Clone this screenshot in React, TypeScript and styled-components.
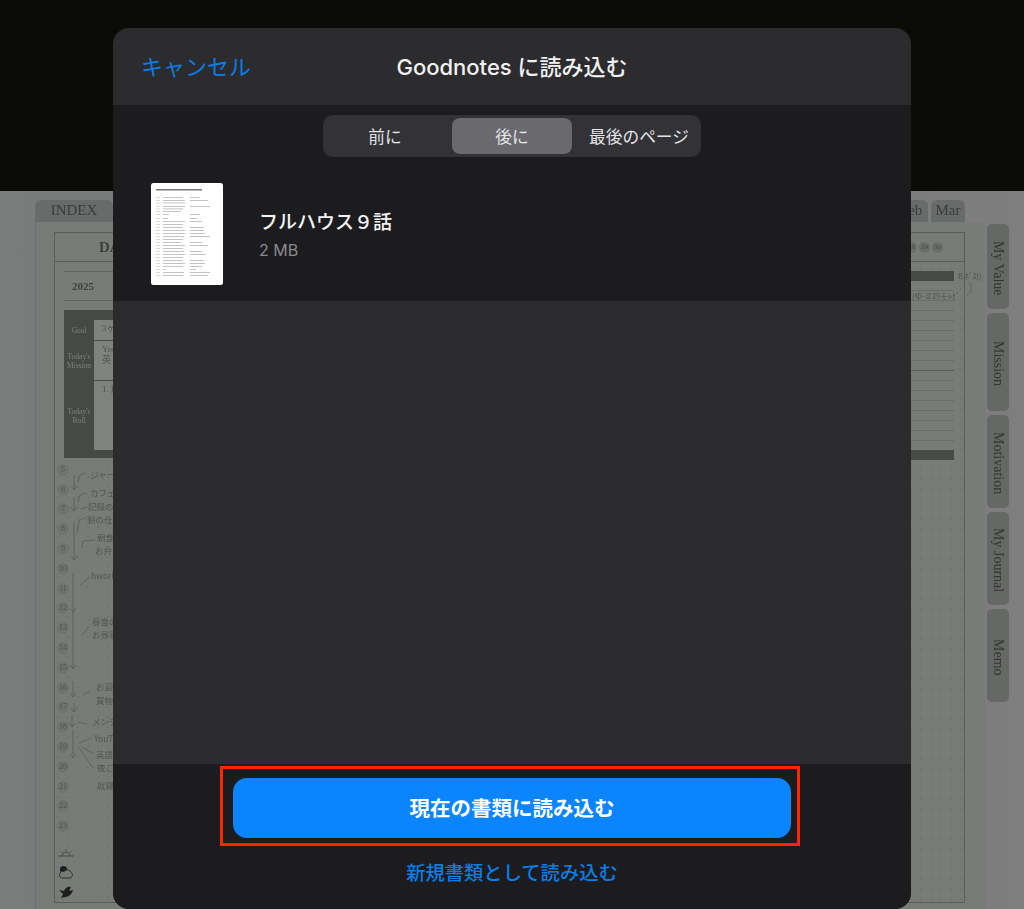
import React from 'react'
import styled, { createGlobalStyle } from 'styled-components'

const UI_FONT = `Inter, "Noto Sans CJK JP", sans-serif`
const SERIF = `"Liberation Serif", "Noto Sans CJK JP", serif`

const GlobalStyle = createGlobalStyle`
  html, body { margin: 0; padding: 0; background: #0b0c08; }
  * { box-sizing: border-box; }
`

const Screen = styled.div`
  position: relative;
  width: 1024px;
  height: 909px;
  overflow: hidden;
  background: #0b0c08;
`

// dimmed planner behind the sheet
const Planner = styled.div`
  margin-top: 191px;
  height: 718px;
  padding-top: 9px;
  background: linear-gradient(90deg, #7a7c7b, #747675 50%, #7d7e7d);
  filter: blur(0.5px);
`

const TabRow = styled.div`
  display: flex;
  justify-content: space-between;
  width: 930px;
  height: 22px;
  margin-left: 35px;
`

const TabGroup = styled.div`
  display: flex;
  gap: 3px;
`

const MonthTab = styled.div<{ $w: number }>`
  width: ${p => p.$w}px;
  height: 22px;
  border-radius: 6px 6px 0 0;
  background: #686b69;
  color: #3a3c3a;
  font: 15px/20px ${SERIF};
  text-align: center;
`

const PlannerRow = styled.div`
  display: flex;
  height: 687px;
`

const Sheet = styled.div`
  width: 950px;
  margin-left: 35px;
  padding: 10px 20px 6px 18px;
  background: #787c78;
  border-left: 1px solid #6d706d;
`

const Frame = styled.div`
  display: flex;
  flex-direction: column;
  height: 671px;
  border: 1px solid #5a5d5a;
`

const FrameHead = styled.div`
  display: flex;
  align-items: center;
  justify-content: space-between;
  flex: none;
  height: 29px;
  padding: 0 21px 0 44px;
  border-bottom: 1px solid #5a5d5a;
  color: #3c3e3c;
  font: bold 15px ${SERIF};
`

const DateList = styled.div`
  display: flex;
  gap: 2px;
`

const DateDot = styled.span`
  width: 11px;
  height: 11px;
  border-radius: 50%;
  background: #6a6d6a;
  color: #4a4c4a;
  font: 7px/11px ${SERIF};
  text-align: center;
`

const FrameBody = styled.div`
  display: grid;
  flex: 1;
  grid-template-columns: 110px 1fr 70px;
`

const LeftColumn = styled.div`
  padding-top: 9px;
`

const YearBlock = styled.div`
  height: 30px;
  margin: 0 0 9px 9px;
  padding-left: 8px;
  border-top: 1px solid #5f625f;
  border-bottom: 1px solid #5f625f;
  color: #3f413f;
  font: bold 11px/28px ${SERIF};
`

const RoleTable = styled.div`
  display: grid;
  grid-template-columns: 30px 1fr;
  grid-template-rows: 20px 39px 69px;
  row-gap: 1px;
  height: 148px;
  margin-left: 9px;
  padding: 10px 0;
  background: #464946;
`

const RoleLabel = styled.div`
  display: flex;
  align-items: center;
  justify-content: center;
  color: #7f827f;
  font: 7.5px/9px ${SERIF};
  text-align: center;
`

const RoleCell = styled.div`
  padding: 3px 0 0 8px;
  background: #7e837e;
  color: #4f514f;
  font: 9px/11px ${SERIF};
`

const HourArea = styled.div`
  position: relative;
  margin-top: 2px;
  background-image: radial-gradient(circle, #6f736f 0.6px, transparent 1px);
  background-size: 10px 10px;
  background-position: 18px 2px;
`

const HourRow = styled.div`
  display: flex;
  align-items: center;
  height: 19.8px;
  padding-left: 2px;
`

const HourDot = styled.span`
  width: 12px;
  height: 12px;
  border-radius: 50%;
  background: #707370;
  color: #505250;
  font: 8px/12px ${SERIF};
  text-align: center;
`

const WeatherList = styled.div`
  display: flex;
  flex-direction: column;
  margin-top: 7px;
  padding-left: 1px;
`

const ScribbleLayer = styled.svg`
  position: absolute;
  top: 0;
  left: 0;
  overflow: visible;
  pointer-events: none;
`

const RightColumn = styled.div`
  position: relative;
  display: flex;
  flex-direction: column;
  padding: 9px 10px 0 0;
  background-image: radial-gradient(circle, #6e716e 0.6px, transparent 1px);
  background-size: 10px 10px;
  background-position: 2px 2px;
`

const RightBar = styled.div`
  flex: none;
  height: 10px;
  background: #474a45;
`

const RuledRow = styled.div<{ $strong?: boolean }>`
  flex: none;
  height: 10px;
  background: #787c78;
  border-bottom: 1px solid ${p => (p.$strong ? '#5a5d5a' : '#696c69')};
`

const RuledGap = styled.div`
  flex: none;
  height: 9px;
  background: #787c78;
`

const SideTabs = styled.div`
  display: flex;
  flex-direction: column;
  gap: 4px;
  padding: 2px 0 0 2px;
`

const SideTab = styled.div<{ $h: number }>`
  display: flex;
  align-items: center;
  justify-content: center;
  width: 22px;
  height: ${p => p.$h}px;
  padding-top: 4px;
  border-radius: 5px;
  background: #666866;
  color: #333533;
  font: 14px ${SERIF};
  writing-mode: vertical-rl;
`

// import sheet on top
const Modal = styled.div`
  position: absolute;
  top: 28px;
  left: 113px;
  display: flex;
  flex-direction: column;
  width: 798px;
  height: 881px;
  overflow: hidden;
  border-radius: 16px;
  background: #2c2c2e;
  font-family: ${UI_FONT};
`

const Header = styled.div`
  display: grid;
  flex: none;
  grid-template-columns: 1fr auto 1fr;
  align-items: center;
  height: 77px;
  padding: 0 28px 4px;
`

const CancelButton = styled.span`
  color: #0a7de8;
  font-size: 22px;
`

const Title = styled.h1`
  margin: 0;
  color: #f2f2f4;
  font-size: 22px;
  font-weight: 500;
`

const TopSection = styled.div`
  flex: none;
  height: 196px;
  padding-top: 10px;
  background: #1c1c1e;
`

const Segments = styled.div`
  display: grid;
  grid-template-columns: 118px 136px 118px;
  width: 378px;
  height: 42px;
  margin: 0 auto;
  padding: 3px;
  border-radius: 10px;
  background: #323237;
`

const Segment = styled.div<{ $active?: boolean }>`
  display: flex;
  align-items: center;
  justify-content: center;
  margin: ${p => (p.$active ? '0 8px' : '0')};
  padding-bottom: 1px;
  border-radius: 8px;
  background: ${p => (p.$active ? '#69696e' : 'transparent')};
  color: #e4e4e6;
  font-size: 16.7px;
  white-space: nowrap;
`

const FileRow = styled.div`
  display: flex;
  align-items: center;
  gap: 36px;
  margin-top: 26px;
  padding-left: 38px;
`

const FileInfo = styled.div`
  display: flex;
  flex-direction: column;
  gap: 5px;
  margin-top: 2px;
`

const FileName = styled.div`
  color: #f4f4f6;
  font-size: 19px;
  font-weight: 500;
  line-height: 24px;
`

const FileSize = styled.div`
  color: #8a8a8e;
  font-size: 16px;
  line-height: 20px;
`

const Middle = styled.div`
  flex: 1;
`

const Footer = styled.div`
  display: flex;
  flex: none;
  flex-direction: column;
  align-items: center;
  height: 145px;
  padding-top: 2px;
  background: #1c1c1e;
`

const Highlight = styled.div`
  width: 580px;
  height: 80px;
  margin-right: 4px;
  padding: 9px 6px 0 10px;
  border: 3px solid #ff2600;
`

const PrimaryButton = styled.div`
  display: flex;
  align-items: center;
  justify-content: center;
  height: 60px;
  padding-bottom: 3px;
  border-radius: 14px;
  background: #0a84ff;
  color: #fff;
  font-size: 20.5px;
  font-weight: 700;
`

const SecondaryButton = styled.div`
  margin-top: 14px;
  color: #0a7de8;
  font-size: 19.3px;
  font-weight: 500;
  line-height: 26px;
`

const ThumbSvg = styled.svg`
  flex: none;
  filter: blur(0.3px);
`

const HOURS = [5, 6, 7, 8, 9, 10, 11, 12, 13, 14, 15, 16, 17, 18, 19, 20, 21, 22, 23]
const RULED = Array.from({ length: 16 }, (_, i) => i)

// page coordinates, so they can be read straight off the screenshot
const ARROWS = [
  [74, 475, 74, 490], [74, 497, 74, 511], [74, 522, 74, 560], [73, 573, 73, 612],
  [73, 612, 73, 669], [73, 681, 73, 697], [74, 703, 74, 712], [72, 715, 72, 727], [73, 730, 73, 758],
]

const HOOKS = [
  'M78 482 L80 475 L86 473', 'M78 502 L80 495 L87 493', 'M81 509 L87 507',
  'M77 533 L79 520 L86 518', 'M82 548 L83 541 L95 540', 'M80 585 L90 577',
  'M82 635 L89 627', 'M83 695 L90 691', 'M78 722 L87 724',
  'M79 743 L92 738', 'M82 747 L93 753', 'M79 748 L93 768',
]

const NOTES: [number, number, string][] = [
  [90, 478, 'ジャーナリング'], [90, 496, 'カフェで'], [88, 510, '記録の'], [87, 523, '朝の仕度'],
  [97, 541, '朝食'], [95, 554, 'お弁当'], [91, 579, 'hwork'], [92, 625, '昼食の'], [92, 638, 'お昼寝'],
  [96, 690, 'お迎え'], [96, 704, '買物'], [92, 725, 'メンテ'], [94, 742, 'YouTube'],
  [96, 758, '英語'], [97, 771, '夜ご飯'], [97, 789, '就寝'],
]

// thumbnail rows: y, left text width, right text width
const THUMB_ROWS = [
  [14, 20, 10], [17, 22, 18], [19.5, 22, 0], [23, 22, 20], [25.5, 20, 0], [28, 18, 0], [31, 6, 10],
  [35, 5, 7], [38, 22, 12], [41, 20, 0], [44, 20, 14], [47, 22, 14], [50, 22, 15], [53, 21, 20],
  [56, 20, 0], [59, 18, 12], [62, 22, 18], [65, 20, 0], [68, 21, 12], [71, 22, 16], [74, 20, 0],
  [77, 20, 14], [80, 22, 15], [83, 20, 12], [86, 3, 6], [89, 21, 20], [92, 20, 18],
]

function Thumbnail() {
  return (
    <ThumbSvg width="72" height="102" viewBox="0 0 72 102">
      <rect width="72" height="102" rx="2.5" fill="#fff" />
      <rect x="5" y="6" width="46" height="1.5" fill="#777" />
      {THUMB_ROWS.map(([y, l, r]) => (
        <g key={y} fill="#b4b4b4">
          <rect x="5" y={y} width="4" height="0.8" fill="#d0d0d0" />
          <rect x="12" y={y} width={l} height="0.8" />
          {r > 0 && <rect x="39" y={y} width={r} height="0.8" />}
        </g>
      ))}
    </ThumbSvg>
  )
}

function Scribbles() {
  return (
    <ScribbleLayer width="60" height="380" viewBox="55 460 60 380">
      <g fill="none" stroke="#585b58" strokeWidth="0.8">
        {ARROWS.map(([x1, y1, x2, y2]) => (
          <path key={`${x2}-${y2}`} d={`M${x1} ${y1} L${x2} ${y2} M${x2 - 3} ${y2 - 4} L${x2} ${y2} L${x2 + 3} ${y2 - 4}`} />
        ))}
        {HOOKS.map(d => <path key={d} d={d} />)}
      </g>
      <g fill="#535553" fontSize="8.5" fontFamily={`"Noto Sans CJK JP", sans-serif`}>
        {NOTES.map(([x, y, t]) => <text key={t} x={x} y={y}>{t}</text>)}
      </g>
    </ScribbleLayer>
  )
}

function Sunrise() {
  return (
    <svg width="20" height="20" viewBox="0 0 20 20">
      <path d="M2 13 H18 M6 13 A4 4 0 0 1 14 13 M10 6 V8 M4.5 8 L6 9.5 M15.5 8 L14 9.5" fill="none" stroke="#434543" strokeWidth="0.9" />
    </svg>
  )
}

function CloudySun() {
  return (
    <svg width="20" height="19" viewBox="0 0 20 19">
      <circle cx="7.5" cy="6.5" r="3.6" fill="#1d1e1d" />
      <path d="M6 15 H14 A3 3 0 0 0 15 9.5 A4 4 0 0 0 8 8.5 A3.3 3.3 0 0 0 6 15 Z" fill="#787c78" stroke="#2e302e" strokeWidth="1" />
    </svg>
  )
}

function Bird() {
  return (
    <svg width="20" height="20" viewBox="0 0 20 20">
      <path d="M3 8 L8 9 C9 6 12 4 15 5 L13 9 L17 8 C16 12 13 15 9 15 L5 16 L7 12 Z" fill="#1d1e1d" />
    </svg>
  )
}

function BackgroundPlanner() {
  return (
    <Planner>
      <TabRow>
        <MonthTab $w={78}>INDEX</MonthTab>
        <TabGroup>
          <MonthTab $w={34}>Feb</MonthTab>
          <MonthTab $w={34}>Mar</MonthTab>
        </TabGroup>
      </TabRow>
      <PlannerRow>
        <Sheet>
          <Frame>
            <FrameHead>
              <span>DAILY</span>
              <DateList>
                <DateDot>28</DateDot>
                <DateDot>29</DateDot>
                <DateDot>30</DateDot>
              </DateList>
            </FrameHead>
            <FrameBody>
              <LeftColumn>
                <YearBlock>2025</YearBlock>
                <RoleTable>
                  <RoleLabel>Goal</RoleLabel>
                  <RoleCell>3ヶ</RoleCell>
                  <RoleLabel>Today's Mission</RoleLabel>
                  <RoleCell>You<br />英</RoleCell>
                  <RoleLabel>Today's Roll</RoleLabel>
                  <RoleCell>1. 創</RoleCell>
                </RoleTable>
                <HourArea>
                  {HOURS.map(h => (
                    <HourRow key={h}><HourDot>{h}</HourDot></HourRow>
                  ))}
                  <Scribbles />
                  <WeatherList>
                    <Sunrise />
                    <CloudySun />
                    <Bird />
                  </WeatherList>
                </HourArea>
              </LeftColumn>
              <div />
              <RightColumn>
                <RightBar />
                {RULED.map(i => <RuledRow key={i} $strong={i === 8} />)}
                <RuledGap />
                <RightBar />
                <ScribbleLayer width="90" height="50" viewBox="894 262 90 50">
                  <g fill="#4b4d4b" fontSize="7.5" fontFamily={`"Noto Sans CJK JP", sans-serif`}>
                    <text x="958" y="279">B.ﾎﾞｽ))</text>
                    <text x="912" y="299">(ゆ-ミｽﾜ-ﾓ-ﾚﾋﾞ</text>
                  </g>
                  <path d="M969 282 C973 287 971 293 967 295" fill="none" stroke="#535653" strokeWidth="0.7" />
                </ScribbleLayer>
              </RightColumn>
            </FrameBody>
          </Frame>
        </Sheet>
        <SideTabs>
          <SideTab $h={85}>My Value</SideTab>
          <SideTab $h={98}>Mission</SideTab>
          <SideTab $h={93}>Motivation</SideTab>
          <SideTab $h={93}>My Journal</SideTab>
          <SideTab $h={93}>Memo</SideTab>
        </SideTabs>
      </PlannerRow>
    </Planner>
  )
}

export default function App() {
  return (
    <Screen>
      <GlobalStyle />
      <BackgroundPlanner />
      <Modal>
        <Header>
          <CancelButton>キャンセル</CancelButton>
          <Title>Goodnotes に読み込む</Title>
        </Header>
        <TopSection>
          <Segments>
            <Segment>前に</Segment>
            <Segment $active>後に</Segment>
            <Segment>最後のページ</Segment>
          </Segments>
          <FileRow>
            <Thumbnail />
            <FileInfo>
              <FileName>フルハウス９話</FileName>
              <FileSize>2 MB</FileSize>
            </FileInfo>
          </FileRow>
        </TopSection>
        <Middle />
        <Footer>
          <Highlight>
            <PrimaryButton>現在の書類に読み込む</PrimaryButton>
          </Highlight>
          <SecondaryButton>新規書類として読み込む</SecondaryButton>
        </Footer>
      </Modal>
    </Screen>
  )
}
